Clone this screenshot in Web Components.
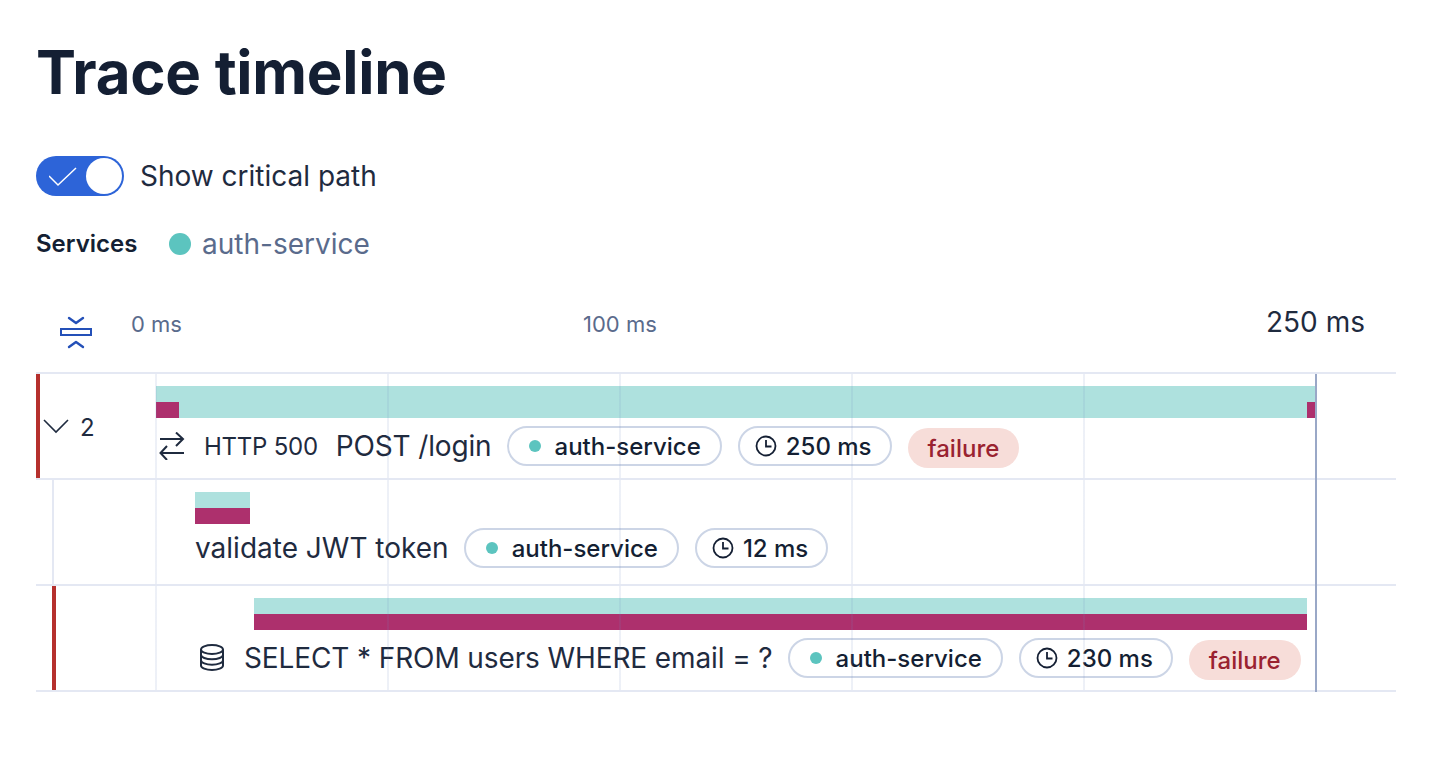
<!DOCTYPE html>
<html lang="en">
<head>
<meta charset="utf-8">
<title>Trace timeline</title>
<style>
  html, body { margin: 0; background: #fff; }
  body { font-family: Inter, "Liberation Sans", sans-serif; color: #1f2b3f; }
  trace-page { width: 1436px; height: 764px; }
</style>
</head>
<body>
<trace-page>
  <trace-toggle>Show critical path</trace-toggle>
  <service-legend name="auth-service"></service-legend>
  <time-ruler></time-ruler>
  <span-row first bar-left="0" bar-width="1160" crit="edge" expander="2" marked="outer" label-gap="8">
    <svg slot="icon" width="30" height="28" viewBox="0 0 30 28" fill="none" stroke="#1f2b3f" stroke-width="2"><path d="M4 7h23.500M20 .5L27 7l-7 7M28 21H4.500M11 14l-6.500 7 6.500 7"/></svg>
    <span slot="code">HTTP 500</span>
    <span style="letter-spacing:-0.15px">POST /login</span>
    <meta-pill slot="pills" dot>auth-service</meta-pill>
    <meta-pill slot="pills" clock>250 ms</meta-pill>
    <fail-pill slot="pills">failure</fail-pill>
  </span-row>
  <span-row bar-left="39" bar-width="55" crit="half" indent text-left="39" label-gap="4">
    validate JWT token
    <meta-pill slot="pills" dot>auth-service</meta-pill>
    <meta-pill slot="pills" clock>12 ms</meta-pill>
  </span-row>
  <span-row bar-left="98" bar-width="1053" crit="half" indent marked="inner" text-left="39" label-gap="8">
    <svg slot="icon" width="31" height="28" viewBox="0 0 31 28" fill="none" stroke="#1f2b3f" stroke-width="2" style="overflow:visible"><ellipse cx="17" cy="5.500" rx="11" ry="4.500"/><path d="M6 5.500v16c0 2.500 5 4.500 11 4.500s11-2 11-4.500v-16M6 10.800c0 2.500 5 4.500 11 4.500s11-2 11-4.500M6 16.200c0 2.500 5 4.500 11 4.500s11-2 11-4.500"/></svg>
    <span style="letter-spacing:-0.11px">SELECT * FROM users WHERE email = ?</span>
    <meta-pill slot="pills" dot>auth-service</meta-pill>
    <meta-pill slot="pills" clock>230 ms</meta-pill>
    <fail-pill slot="pills">failure</fail-pill>
  </span-row>
</trace-page>

<script>
class TracePage extends HTMLElement {
  constructor() {
    super();
    this.attachShadow({ mode: 'open' });
    this.shadowRoot.innerHTML = `
      <style>
        :host { display: block; box-sizing: border-box; padding: 34px 40px 0 36px; overflow: hidden; }
        h1 { margin: 0 0 46px; font-size: 60px; line-height: 76px; font-weight: 700; letter-spacing: -0.28px; color: #141f33; }
      </style>
      <h1>Trace timeline</h1>
      <slot></slot>
    `;
  }
}

class TraceToggle extends HTMLElement {
  constructor() {
    super();
    this.attachShadow({ mode: 'open' });
    this.shadowRoot.innerHTML = `
      <style>
        :host { display: flex; align-items: center; gap: 16px; height: 40px; font-size: 28px; color: #1f2b3f; }
        .track { box-sizing: border-box; width: 88px; height: 40px; padding: 2px; border-radius: 20px; background: #2d64d8;
          display: flex; align-items: center; justify-content: space-between; }
        .track svg { margin-left: 11px; }
        .knob { width: 36px; height: 36px; border-radius: 50%; background: #fff; }
      </style>
      <div class="track">
        <svg width="30" height="22" viewBox="0 0 30 22" fill="none" stroke="#fff" stroke-width="1.500"><path d="M0 11l9 9L27 3"/></svg>
        <div class="knob"></div>
      </div>
      <slot></slot>
    `;
  }
}

class ServiceLegend extends HTMLElement {
  constructor() {
    super();
    this.attachShadow({ mode: 'open' });
    const name = this.getAttribute('name');
    this.shadowRoot.innerHTML = `
      <style>
        :host { display: flex; align-items: center; height: 40px; margin-top: 28px; }
        b { width: 133px; font-size: 24px; font-weight: 600; color: #141f33; margin-bottom: 2px; }
        i { width: 22px; height: 22px; border-radius: 50%; background: #5cc4bf; margin-right: 11px; }
        span { font-size: 28px; color: #5a6b8c; }
      </style>
      <b>Services</b><i></i><span>${name}</span>
    `;
  }
}

class TimeRuler extends HTMLElement {
  constructor() {
    super();
    this.attachShadow({ mode: 'open' });
    this.shadowRoot.innerHTML = `
      <style>
        :host { display: flex; align-items: center; height: 60px; margin-top: 38px; margin-bottom: 10px; }
        .collapse { width: 95px; padding-left: 24px; box-sizing: border-box; display: flex; }
        .tick { font-size: 22px; color: #5a6b8c; margin-bottom: 16px; }
        .zero { width: 452px; }
        .mid { width: 683px; }
        .end { font-size: 28px; color: #1f2b3f; margin-bottom: 20px; }
      </style>
      <div class="collapse">
        <svg width="32" height="34" viewBox="0 0 32 34" fill="none" stroke="#2450b8" stroke-width="2"><path stroke-width="2.400" stroke-linecap="round" stroke-linejoin="round" d="M9 3l7 5 7-5M9 32l7-5 7 5"/><rect x="1" y="14" width="30" height="6"/></svg>
      </div>
      <span class="tick zero">0 ms</span>
      <span class="tick mid">100 ms</span>
      <span class="end">250 ms</span>
    `;
  }
}

class SpanRow extends HTMLElement {
  constructor() {
    super();
    this.attachShadow({ mode: 'open' });
  }

  connectedCallback() {
    const left = this.getAttribute('bar-left');
    const width = this.getAttribute('bar-width');
    const crit = this.getAttribute('crit');
    const indent = this.hasAttribute('indent');
    const marked = this.getAttribute('marked');
    const expander = this.getAttribute('expander');
    const textLeft = this.getAttribute('text-left') || 0;
    const labelGap = this.getAttribute('label-gap');

    const bottom = crit === 'edge'
      ? '<div class="crit" style="width:23px"></div><div class="crit" style="width:9px"></div>'
      : '<div class="crit" style="flex:1"></div>';
    const expand = expander
      ? `<div class="expand"><svg width="26" height="16" viewBox="0 0 26 16" fill="none" stroke="#1f2b3f" stroke-width="1.600"><path d="M1 2l12 12L25 2"/></svg><span>${expander}</span></div>`
      : '';

    this.shadowRoot.innerHTML = `
      <style>
        :host { display: block; position: relative; box-sizing: border-box; height: 106px; border-bottom: 2px solid #e4e8f3; }
        :host([first]) { height: 108px; border-top: 2px solid #e4e8f3; }
        .guide { position: absolute; top: 0; bottom: 0; width: 2px; background: #e4e8f3; }
        .guide.red { width: 4px; background: #b5302d; }
        .grid { position: absolute; top: 0; bottom: 0; left: 119px; width: 1162px; z-index: 2; pointer-events: none;
          background: repeating-linear-gradient(to right, rgba(110, 135, 190, .12) 0 2px, transparent 2px 232px); }
        .now { position: absolute; top: 0; bottom: -2px; left: 1279px; width: 2px; background: #9aa8c7; z-index: 3; }
        .wrap { display: flex; height: 100%; position: relative; z-index: 1; }
        .side { width: 120px; flex: none; display: flex; align-items: center; }
        .expand { display: flex; align-items: center; gap: 11px; padding-left: 7px; font-size: 24px; color: #1f2b3f; }
        .expand span { margin-top: 2px; }
        .main { flex: 1; min-width: 0; padding-top: 12px; }
        .bar { height: 32px; margin-left: ${left}px; width: ${width}px; display: flex; flex-direction: column; }
        .top { height: 16px; background: #aee1de; }
        .bottom { height: 16px; background: #aee1de; display: flex; justify-content: space-between; }
        .crit { background: #ad306d; }
        .label { display: flex; align-items: center; height: 40px; margin-top: ${labelGap}px; margin-left: ${textLeft}px; white-space: nowrap; font-size: 28px; color: #1f2b3f; }
        ::slotted([slot=icon]) { margin-right: 18px; flex: none; }
        ::slotted([slot=code]) { font-size: 24px; letter-spacing: -0.25px; margin-right: 18px; }
        .pills { display: flex; align-items: center; gap: 16px; margin-left: 15px; }
      </style>
      ${indent ? '<div class="guide" style="left:16px"></div>' : ''}
      ${marked === 'outer' ? '<div class="guide red" style="left:0"></div>' : ''}
      ${marked === 'inner' ? '<div class="guide red" style="left:16px"></div>' : ''}
      <div class="grid"></div>
      <div class="now"></div>
      <div class="wrap">
        <div class="side">${expand}</div>
        <div class="main">
          <div class="bar"><div class="top"></div><div class="bottom">${bottom}</div></div>
          <div class="label">
            <slot name="icon"></slot><slot name="code"></slot><slot></slot>
            <div class="pills"><slot name="pills"></slot></div>
          </div>
        </div>
      </div>
    `;
  }
}

class MetaPill extends HTMLElement {
  constructor() {
    super();
    this.attachShadow({ mode: 'open' });
  }

  connectedCallback() {
    const hasDot = this.hasAttribute('dot');
    const lead = hasDot
      ? '<i></i>'
      : '<svg width="22" height="22" viewBox="0 0 22 22" fill="none" stroke="#141f33" stroke-width="1.800"><circle cx="11" cy="11" r="9.500"/><path d="M11 5v6.500h5.500"/></svg>';
    this.shadowRoot.innerHTML = `
      <style>
        :host { display: inline-flex; align-items: center; box-sizing: border-box; height: 40px; gap: ${hasDot ? 14 : 9}px; padding: 0 ${hasDot ? 19 : 18}px 0 ${hasDot ? 20 : 15}px;
          border: 2px solid #ccd5e6; border-radius: 20px; background: #fff; font-size: 24px; font-weight: 500; color: #141f33; }
        i { width: 12px; height: 12px; border-radius: 50%; background: #5cc4bf; }
      </style>
      ${lead}<slot></slot>
    `;
  }
}

class FailPill extends HTMLElement {
  constructor() {
    super();
    this.attachShadow({ mode: 'open' });
    this.shadowRoot.innerHTML = `
      <style>
        :host { display: inline-flex; align-items: center; box-sizing: border-box; height: 40px; margin-top: 4px; padding: 0 20px; border-radius: 20px;
          background: #f7ddd9; font-size: 24px; font-weight: 500; color: #9a2230; }
      </style>
      <slot></slot>
    `;
  }
}

customElements.define('trace-page', TracePage);
customElements.define('trace-toggle', TraceToggle);
customElements.define('service-legend', ServiceLegend);
customElements.define('time-ruler', TimeRuler);
customElements.define('span-row', SpanRow);
customElements.define('meta-pill', MetaPill);
customElements.define('fail-pill', FailPill);
</script>
</body>
</html>
